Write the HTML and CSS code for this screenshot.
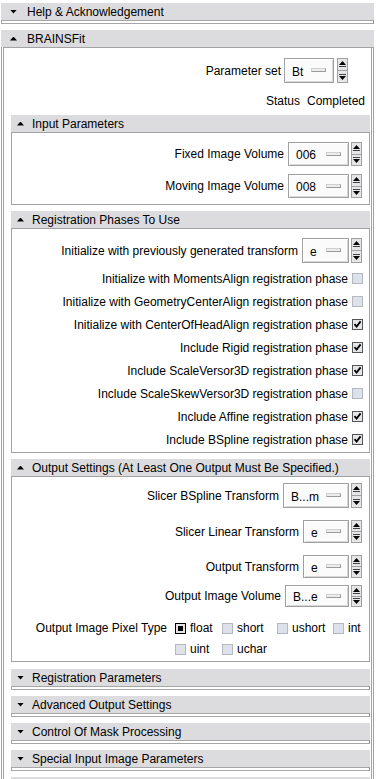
FILE: index.html
```html
<!DOCTYPE html>
<html lang="en">
  <head>
    <meta charset="UTF-8" />
    <title>BRAINSFit</title>
    <meta name="viewport" content="width=device-width, initial-scale=1.0" />
    <link rel="stylesheet" href="styles.css">
  </head>
  <body>
    <div class="panel">
      <section class="section top">
        <div class="bar"><span class="arrow down"></span>Help &amp; Acknowledgement</div>
        <div class="groove"></div>
      </section>

      <section class="section top">
        <div class="bar"><span class="arrow up"></span>BRAINSFit</div>
        <div class="frame outer">
          <div class="row param-set">
            <span>Parameter set</span>
            <div class="menu w50 tall"><span>Bt</span><i></i></div>
            <div class="spin"><b class="up"></b><b class="down"></b></div>
          </div>
          <div class="row status"><span>Status</span><span>Completed</span></div>

          <!-- Input Parameters -->
          <section class="section sub">
            <div class="bar"><span class="arrow up"></span>Input Parameters</div>
            <div class="frame rows">
              <div class="row">
                <span>Fixed Image Volume</span>
                <div class="menu w61"><span>006</span><i></i></div>
                <div class="spin"><b class="up"></b><b class="down"></b></div>
              </div>
              <div class="row">
                <span>Moving Image Volume</span>
                <div class="menu w61"><span>008</span><i></i></div>
                <div class="spin"><b class="up"></b><b class="down"></b></div>
              </div>
            </div>
          </section>

          <!-- Registration Phases To Use -->
          <section class="section sub">
            <div class="bar"><span class="arrow up"></span>Registration Phases To Use</div>
            <div class="frame rows phases">
              <div class="row">
                <span>Initialize with previously generated transform</span>
                <div class="menu w47 tall"><span>e</span><i></i></div>
                <div class="spin"><b class="up"></b><b class="down"></b></div>
              </div>
              <div class="row check-row">
                <span>Initialize with MomentsAlign registration phase</span>
                <span class="box"></span>
              </div>
              <div class="row check-row">
                <span>Initialize with GeometryCenterAlign registration phase</span>
                <span class="box"></span>
              </div>
              <div class="row check-row">
                <span>Initialize with CenterOfHeadAlign registration phase</span>
                <span class="box on"><svg width="9" height="9" viewBox="0 0 9 9"><path d="M1.5 4.2 3.6 6.6 7.6 1.4" /></svg></span>
              </div>
              <div class="row check-row">
                <span>Include Rigid registration phase</span>
                <span class="box on"><svg width="9" height="9" viewBox="0 0 9 9"><path d="M1.5 4.2 3.6 6.6 7.6 1.4" /></svg></span>
              </div>
              <div class="row check-row">
                <span>Include ScaleVersor3D registration phase</span>
                <span class="box on"><svg width="9" height="9" viewBox="0 0 9 9"><path d="M1.5 4.2 3.6 6.6 7.6 1.4" /></svg></span>
              </div>
              <div class="row check-row">
                <span>Include ScaleSkewVersor3D registration phase</span>
                <span class="box"></span>
              </div>
              <div class="row check-row">
                <span>Include Affine registration phase</span>
                <span class="box on"><svg width="9" height="9" viewBox="0 0 9 9"><path d="M1.5 4.2 3.6 6.6 7.6 1.4" /></svg></span>
              </div>
              <div class="row check-row">
                <span>Include BSpline registration phase</span>
                <span class="box on"><svg width="9" height="9" viewBox="0 0 9 9"><path d="M1.5 4.2 3.6 6.6 7.6 1.4" /></svg></span>
              </div>
            </div>
          </section>

          <!-- Output Settings -->
          <section class="section sub">
            <div class="bar"><span class="arrow up"></span>Output Settings (At Least One Output Must Be Specified.)</div>
            <div class="frame rows output">
              <div class="row">
                <span>Slicer BSpline Transform</span>
                <div class="menu w66 tall"><span>B...m</span><i></i></div>
                <div class="spin"><b class="up"></b><b class="down"></b></div>
              </div>
              <div class="row gap-12">
                <span>Slicer Linear Transform</span>
                <div class="menu w46 short"><span>e</span><i></i></div>
                <div class="spin"><b class="up"></b><b class="down"></b></div>
              </div>
              <div class="row gap-12">
                <span>Output Transform</span>
                <div class="menu w46 short"><span>e</span><i></i></div>
                <div class="spin"><b class="up"></b><b class="down"></b></div>
              </div>
              <div class="row gap-7">
                <span>Output Image Volume</span>
                <div class="menu w64 shorter"><span>B...e</span><i></i></div>
                <div class="spin"><b class="up"></b><b class="down"></b></div>
              </div>
              <div class="row pixel-type gap-14">
                <span class="pt-label">Output Image Pixel Type</span>
                <div class="radios">
                  <span class="radio"><span class="dot on"></span>float</span>
                  <span class="radio"><span class="dot"></span>short</span>
                  <span class="radio"><span class="dot"></span>ushort</span>
                  <span class="radio"><span class="dot"></span>int</span>
                  <span class="radio"><span class="dot"></span>uint</span>
                  <span class="radio"><span class="dot"></span>uchar</span>
                </div>
              </div>
            </div>
          </section>

          <section class="section sub first-closed">
            <div class="bar"><span class="arrow down"></span>Registration Parameters</div>
            <div class="groove"></div>
          </section>
          <section class="section sub">
            <div class="bar"><span class="arrow down"></span>Advanced Output Settings</div>
            <div class="groove"></div>
          </section>
          <section class="section sub">
            <div class="bar"><span class="arrow down"></span>Control Of Mask Processing</div>
            <div class="groove"></div>
          </section>
          <section class="section sub">
            <div class="bar"><span class="arrow down"></span>Special Input Image Parameters</div>
            <div class="groove"></div>
          </section>
          <!-- next section, only its top edge shows -->
          <section class="section sub">
            <div class="bar"><span class="arrow down"></span></div>
            <div class="groove"></div>
          </section>
        </div>
      </section>
    </div>
  </body>
</html>
```

FILE: styles.css
```css
/* --- Reset & base --- */
*, *::before, *::after {
  box-sizing: border-box;
  margin: 0;
  padding: 0;
}
html, body {
  overflow: hidden;
}
body {
  font-family: "Liberation Sans", Arial, sans-serif;
  font-size: 12px;
  line-height: 14px;
  color: #000;
  background: #fff;
}

/* --- Collapsible sections --- */
.panel {
  width: 373px;
  margin-left: 1px;
  padding-top: 3px;
}
.section + .section {
  margin-top: 6px;
}
.bar {
  display: flex;
  align-items: center;
  height: 17px;
  background: #dcdcde;
  white-space: nowrap;
}
.arrow {
  width: 7px;
  height: 4px;
  background: #000;
}
.arrow.down {
  clip-path: polygon(0 0, 100% 0, 50% 100%);
}
.arrow.up {
  clip-path: polygon(50% 0, 100% 100%, 0 100%);
}
.top > .bar {
  padding-left: 9px;
}
.top > .bar .arrow {
  margin-right: 10px;
}
.sub > .bar {
  padding-left: 6px;
}
.sub > .bar .arrow {
  margin-right: 8px;
}
.groove {
  height: 4px;
  border: 1px solid #a6a6a6;
  border-right-color: #8c8c8c;
}

/* --- Frames --- */
.frame {
  border: 1px solid #a2a2a2;
}
.frame.outer {
  border: 3px double #a2a2a2;
  border-top: 1px solid #a2a2a2;
  border-bottom: none;
  padding: 0 1px 0 7px;
}
.outer > .section:first-of-type {
  margin-top: 7px;
}
.first-closed {
  margin-top: 7px !important;
}
.rows {
  display: flex;
  flex-direction: column;
  gap: 8px;
  padding: 9px 7px 6px;
}
.rows.phases {
  padding-bottom: 5px;
}
.rows.output {
  gap: 0;
  padding-top: 6px;
  padding-bottom: 5px;
}
.gap-12 { margin-top: 12px; }
.gap-7 { margin-top: 7px; }
.gap-14 { margin-top: 14px; }

/* --- Rows --- */
.row {
  display: flex;
  justify-content: flex-end;
  align-items: center;
  white-space: nowrap;
}
.row > span:first-child {
  margin-right: 4px;
}
.param-set {
  margin-top: 10px;
  padding-right: 22px;
}
.param-set > span:first-child {
  margin-right: 3px;
}
.param-set .spin {
  margin-left: 3px;
}
.status {
  margin-top: 11px;
  padding-right: 5px;
}
.status span:first-child {
  margin-right: 7px;
}
.check-row {
  height: 15px;
  margin-right: -1px;
}

/* --- Menu button + spinner --- */
.menu {
  display: flex;
  align-items: center;
  justify-content: space-between;
  height: 24px;
  padding: 2px 7px 0 7px;
  border: 1px solid #a0a0a0;
  background: #fbfbfb;
  box-shadow: inset 1px 1px 0 #fff, inset -1px -1px 0 #d8d8d8;
}
.menu i {
  width: 15px;
  height: 4px;
  margin-top: -3px;
  border: 1px solid #9a9a9a;
  border-top-color: #cfcfcf;
  border-left-color: #cfcfcf;
  background: #ececec;
}
.menu.tall { height: 25px; }
.menu.short { height: 23px; }
.menu.shorter { height: 22px; }
.w46 { width: 46px; }
.w47 { width: 47px; }
.w50 { width: 50px; }
.w61 { width: 61px; }
.w64 { width: 64px; }
.w66 { width: 66px; }

.spin {
  display: flex;
  flex-direction: column;
  align-self: stretch;
  width: 11px;
  margin-left: 2px;
}
.spin b {
  flex: 1;
  position: relative;
  border: 1px solid #a0a0a0;
  background: #e6e6e8;
}
.spin b + b {
  border-top: none;
}
.spin b::before,
.spin b::after {
  content: "";
  position: absolute;
  left: 1px;
  width: 7px;
  background: #000;
}
.spin b::before {
  height: 4px;
}
.spin b::after {
  height: 1px;
  background: #444;
}
.spin .up::before {
  top: 2px;
  clip-path: polygon(50% 0, 100% 100%, 0 100%);
}
.spin .up::after {
  top: 7px;
}
.spin .down::before {
  bottom: 2px;
  clip-path: polygon(0 0, 100% 0, 50% 100%);
}
.spin .down::after {
  bottom: 7px;
}

/* --- Check boxes and radio squares --- */
.box,
.dot {
  display: flex;
  align-items: center;
  justify-content: center;
  width: 11px;
  height: 11px;
  border: 1px solid #b4b8c0;
  background: #dce1ea;
}
.box.on {
  border-color: #555;
  background: #e4e6ea;
}
.box svg path {
  fill: none;
  stroke: #000;
  stroke-width: 1.8;
}
.dot.on {
  border-color: #000;
  background: #e4e4e4;
}
.dot.on::after {
  content: "";
  width: 5px;
  height: 5px;
  background: #000;
}

.pixel-type {
  align-items: flex-start;
}
.pixel-type .pt-label {
  margin-right: 8px !important;
}
.radios {
  display: grid;
  grid-template-columns: 47px 55px 56px 29px;
  row-gap: 7px;
}
.radio {
  display: flex;
  align-items: center;
  gap: 4px;
  height: 14px;
}
```
